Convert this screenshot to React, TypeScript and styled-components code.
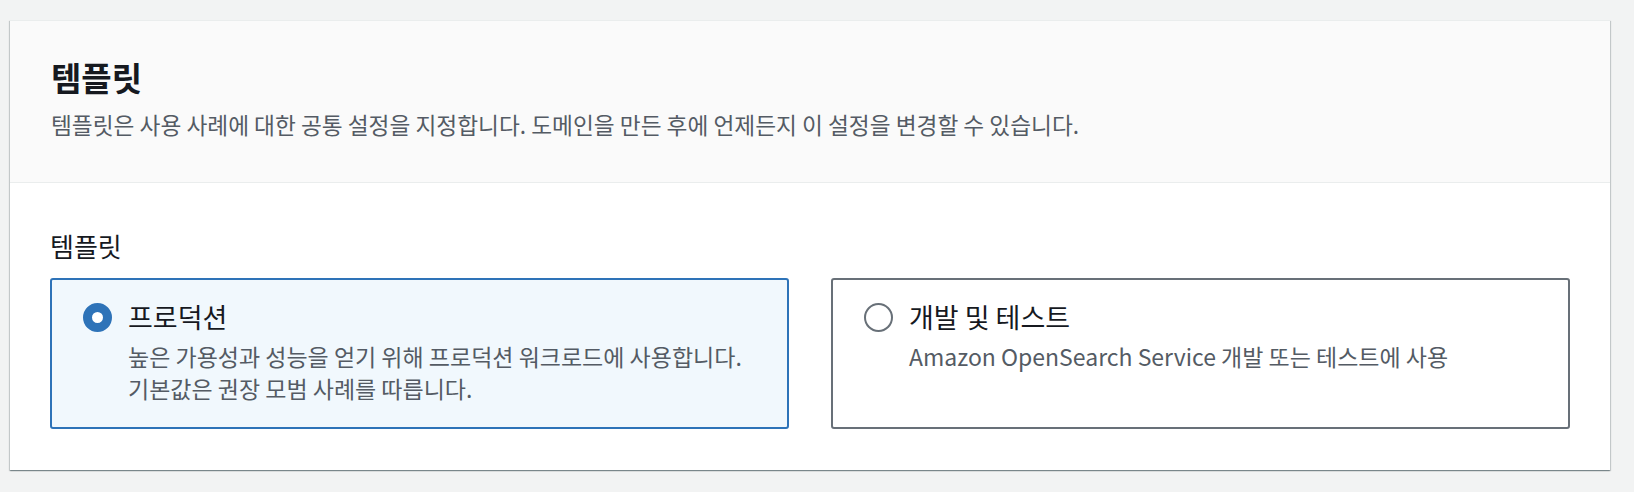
import React, { useState } from "react";
import styled, { createGlobalStyle, css } from "styled-components";

const GlobalStyle = createGlobalStyle`
  html, body {
    margin: 0;
    padding: 0;
    background: #f2f3f3;
  }
  body {
    font-family: "Noto Sans CJK KR", "Noto Sans", sans-serif;
    color: #16191f;
  }
`;

const Page = styled.div`
  padding: 20px 24px 22px 10px;
`;

const Card = styled.section`
  background: #ffffff;
  border-top: 1px solid #eaeded;
  box-shadow: 0 1px 1px 0 rgba(0, 28, 36, 0.3), 1px 1px 1px 0 rgba(0, 28, 36, 0.15),
    -1px 1px 1px 0 rgba(0, 28, 36, 0.15);
`;

const Header = styled.header`
  background: #fafafa;
  border-bottom: 1px solid #eaeded;
  padding: 36px 40px 42px 41px;
`;

const Title = styled.h2`
  margin: 0;
  font-size: 33px;
  line-height: 40px;
  font-weight: 700;
  color: #16191f;
`;

const Description = styled.p`
  margin: 13px 0 0;
  font-size: 22.7px;
  line-height: 30px;
  color: #545b64;
`;

const Body = styled.div`
  padding: 47px 40px 41px 40px;
`;

const Label = styled.div`
  font-size: 26px;
  line-height: 32px;
  color: #16191f;
  margin-bottom: 16px;
`;

const TileGrid = styled.div`
  display: grid;
  grid-template-columns: 1fr 1fr;
  column-gap: 42px;
`;

const Tile = styled.label<{ $selected: boolean }>`
  display: flex;
  flex-direction: column;
  border-radius: 3px;
  padding: 21px 30px 23px 31px;
  cursor: pointer;
  ${(p) =>
    p.$selected
      ? css`
          border: 2px solid #2e73b8;
          background: #f1f8fd;
        `
      : css`
          border: 2px solid #687078;
          background: #ffffff;
        `}
`;

const TileHead = styled.div`
  display: flex;
  align-items: center;
  gap: 16px;
`;

const Radio = styled.span<{ $checked: boolean }>`
  flex: none;
  box-sizing: border-box;
  width: 29px;
  height: 29px;
  border-radius: 50%;
  background: #ffffff;
  ${(p) =>
    p.$checked
      ? css`
          border: 9px solid #2e73b8;
        `
      : css`
          border: 2px solid #687078;
        `}
`;

const TileTitle = styled.span`
  font-size: 27px;
  line-height: 32px;
  color: #16191f;
`;

const TileText = styled.p`
  margin: 7px 0 0 45px;
  font-size: 23px;
  line-height: 32px;
  color: #545b64;
`;

type Option = {
  id: string;
  title: string;
  lines: string[];
};

const options: Option[] = [
  {
    id: "prod",
    title: "프로덕션",
    lines: [
      "높은 가용성과 성능을 얻기 위해 프로덕션 워크로드에 사용합니다.",
      "기본값은 권장 모범 사례를 따릅니다.",
    ],
  },
  {
    id: "dev",
    title: "개발 및 테스트",
    lines: ["Amazon OpenSearch Service 개발 또는 테스트에 사용"],
  },
];

export default function App() {
  const [selected, setSelected] = useState("prod");
  return (
    <>
      <GlobalStyle />
      <Page>
        <Card>
          <Header>
            <Title>템플릿</Title>
            <Description>
              템플릿은 사용 사례에 대한 공통 설정을 지정합니다. 도메인을 만든 후에 언제든지 이 설정을 변경할 수 있습니다.
            </Description>
          </Header>
          <Body>
            <Label>템플릿</Label>
            <TileGrid>
              {options.map((o) => (
                <Tile key={o.id} $selected={selected === o.id} onClick={() => setSelected(o.id)}>
                  <TileHead>
                    <Radio $checked={selected === o.id} />
                    <TileTitle>{o.title}</TileTitle>
                  </TileHead>
                  <TileText>
                    {o.lines.map((l, i) => (
                      <React.Fragment key={i}>
                        {i > 0 && <br />}
                        {l}
                      </React.Fragment>
                    ))}
                  </TileText>
                </Tile>
              ))}
            </TileGrid>
          </Body>
        </Card>
      </Page>
    </>
  );
}
